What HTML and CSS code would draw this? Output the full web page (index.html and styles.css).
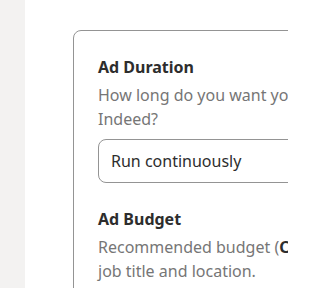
FILE: index.html
```html
<!DOCTYPE html>
<html lang="en">
<head>
<meta charset="utf-8">
<link rel="stylesheet" href="styles.css">
</head>
<body>
<div class="layout">
  <aside class="sidebar"></aside>
  <main class="main">
    <section class="card">
      <div class="field">
        <h2 class="field-title">Ad Duration</h2>
        <p class="field-desc">How long do you want your job to be advertised on<br>Indeed?</p>
        <div class="select">Run continuously</div>
      </div>
      <div class="field">
        <h2 class="field-title">Ad Budget</h2>
        <p class="field-desc">Recommended budget (<b>CA$450.00 per week</b>) based on<br>job title and location.</p>
      </div>
    </section>
  </main>
</div>
</body>
</html>
```
FILE: styles.css
```css
html, body {
  margin: 0;
  padding: 0;
  background: #ffffff;
  overflow: hidden;
  width: 100%;
  height: 100%;
}
body {
  font-family: "Noto Sans", "Open Sans", sans-serif;
  color: #2d2d2d;
}
.layout {
  display: flex;
  width: 288px;
  height: 288px;
  overflow: hidden;
}
.sidebar {
  flex: 0 0 25px;
  background: #f3f2f1;
}
.main {
  flex: 1 1 auto;
  min-width: 0;
  overflow: hidden;
  padding: 30px 0 0 48px;
}
.card {
  width: 520px;
  border: 1px solid #949494;
  border-radius: 8px;
  padding: 24px;
  display: flex;
  flex-direction: column;
  gap: 24px;
}
.field-title {
  margin: 0;
  font-size: 16px;
  font-weight: 700;
  line-height: 24px;
  color: #2d2d2d;
}
.field-desc {
  margin: 4px 0 0;
  font-size: 16px;
  line-height: 24px;
  color: #767676;
}
.field-desc b {
  color: #2d2d2d;
  font-weight: 700;
}
.select {
  margin-top: 8px;
  box-sizing: border-box;
  height: 44px;
  border: 1px solid #949494;
  border-radius: 8px;
  padding: 0 12px;
  display: flex;
  align-items: center;
  font-size: 16px;
  color: #2d2d2d;
}
```
